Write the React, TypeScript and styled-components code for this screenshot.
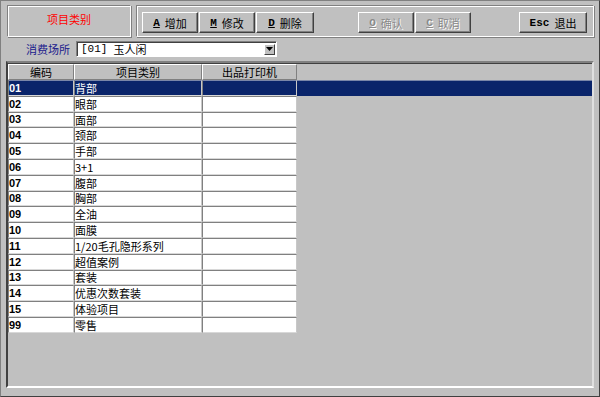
import React from "react";
import styled, { createGlobalStyle, css } from "styled-components";

const GlobalStyle = createGlobalStyle`
  html, body {
    margin: 0;
    padding: 0;
    background: #c0c0c0;
  }
  * {
    box-sizing: border-box;
  }
`;

const CJK = `"Noto Sans CJK SC", "Liberation Sans", sans-serif`;

const rows = [
  { code: "01", name: "背部" },
  { code: "02", name: "眼部" },
  { code: "03", name: "面部" },
  { code: "04", name: "颈部" },
  { code: "05", name: "手部" },
  { code: "06", name: "3+1" },
  { code: "07", name: "腹部" },
  { code: "08", name: "胸部" },
  { code: "09", name: "全油" },
  { code: "10", name: "面膜" },
  { code: "11", name: "1/20毛孔隐形系列" },
  { code: "12", name: "超值案例" },
  { code: "13", name: "套装" },
  { code: "14", name: "优惠次数套装" },
  { code: "15", name: "体验项目" },
  { code: "99", name: "零售" },
];

const Window = styled.div`
  width: 600px;
  height: 397px;
  display: flex;
  flex-direction: column;
  padding: 4px 5px 8px 5px;
  background: #c0c0c0;
  border-top: 1px solid #808080;
  border-left: 1px solid #808080;
  border-right: 1px solid #404040;
  border-bottom: 1px solid #404040;
  font-family: ${CJK};
  font-size: 11px;
  color: #000;
`;

const TopBar = styled.div`
  display: flex;
  gap: 5px;
  height: 32px;
`;

const etched = css`
  border-top: 1px solid #808080;
  border-left: 1px solid #808080;
  border-right: 1px solid #ffffff;
  border-bottom: 1px solid #ffffff;
  box-shadow: inset 1px 1px 0 #ffffff, 1px 1px 0 #808080;
`;

const TitlePanel = styled.div`
  ${etched};
  width: 125px;
  margin-left: 1px;
  display: flex;
  align-items: center;
  justify-content: center;
  padding-bottom: 4px;
  color: #ff0000;
  font-size: 11px;
`;

const Toolbar = styled.div`
  ${etched};
  flex: 1;
  display: flex;
  align-items: flex-start;
  padding: 6px 6px 0 5px;
`;

const ButtonGroup = styled.div`
  display: flex;
  gap: 1px;
`;

const Spacer = styled.div<{ $w: number }>`
  width: ${({ $w }) => $w}px;
  flex: none;
`;

const ToolButton = styled.button<{ $w?: number; $disabled?: boolean }>`
  width: ${({ $w }) => $w ?? 56}px;
  height: 21px;
  padding: 0;
  margin: 0;
  background: #c0c0c0;
  border-top: 1px solid #ffffff;
  border-left: 1px solid #ffffff;
  border-right: 1px solid #404040;
  border-bottom: 1px solid #404040;
  box-shadow: inset -1px -1px 0 #808080;
  display: flex;
  align-items: center;
  justify-content: center;
  gap: 5px;
  font-family: ${CJK};
  font-size: 11px;
  color: ${({ $disabled }) => ($disabled ? "#8a8a8a" : "#000")};
  text-shadow: ${({ $disabled }) => ($disabled ? "1px 1px 0 #ffffff" : "none")};
`;

const HotKey = styled.span<{ $u?: boolean }>`
  font-family: "Liberation Mono", monospace;
  font-size: 11px;
  font-weight: bold;
  text-decoration: ${({ $u }) => ($u ? "underline" : "none")};
`;

const FilterRow = styled.div`
  display: flex;
  align-items: center;
  margin-top: 4px;
  height: 16px;
`;

const FilterLabel = styled.span`
  width: 70px;
  padding-left: 20px;
  color: #1a1a8c;
  font-size: 11px;
`;

const Combo = styled.div`
  width: 201px;
  height: 16px;
  background: #ffffff;
  border-top: 1px solid #808080;
  border-left: 1px solid #808080;
  border-right: 1px solid #ffffff;
  border-bottom: 1px solid #ffffff;
  box-shadow: inset 1px 1px 0 #404040;
  display: flex;
  align-items: center;
  padding: 0 1px 0 4px;
`;

const ComboText = styled.span`
  flex: 1;
  display: flex;
  align-items: center;
  gap: 6px;
  font-size: 11px;
  line-height: 14px;
`;

const ComboCode = styled.span`
  font-family: "Liberation Mono", monospace;
  font-size: 11px;
`;

const ComboArrow = styled.div`
  width: 11px;
  height: 11px;
  background: #c0c0c0;
  border-top: 1px solid #ffffff;
  border-left: 1px solid #ffffff;
  border-right: 1px solid #404040;
  border-bottom: 1px solid #404040;
  display: flex;
  align-items: center;
  justify-content: center;
`;

const GridPanel = styled.div`
  flex: 1;
  margin-top: 4px;
  background: #c0c0c0;
  border-top: 2px solid #808080;
  border-left: 2px solid #404040;
  border-right: 2px solid #dfdfdf;
  border-bottom: 2px solid #ffffff;
  box-shadow: inset 0 1px 0 #404040;
  padding-top: 1px;
`;

const Grid = styled.div`
  display: grid;
  grid-template-columns: 66px 128px 95px 1fr;
  grid-template-rows: 16px;
  grid-auto-rows: 15.8px;
`;

const HeaderCell = styled.div`
  background: #c0c0c0;
  border-top: 1px solid #ffffff;
  border-left: 1px solid #ffffff;
  border-right: 1px solid #808080;
  border-bottom: 1px solid #808080;
  display: flex;
  align-items: center;
  justify-content: center;
  font-size: 11px;
  line-height: 14px;
`;

const Cell = styled.div<{ $sel: boolean; $code?: boolean }>`
  background: ${({ $sel }) => ($sel ? "#0a246a" : "#ffffff")};
  color: ${({ $sel }) => ($sel ? "#ffffff" : "#000000")};
  border-top: 1px solid ${({ $sel }) => ($sel ? "#7a86a8" : "#808080")};
  border-left: 1px solid #808080;
  border-right: 1px solid #c8c8c8;
  border-bottom: 1px solid #d8d8d8;
  display: flex;
  align-items: center;
  padding-left: 0;
  overflow: hidden;
  white-space: nowrap;
  ${({ $code }) =>
    $code
      ? css`
          font-family: "Liberation Sans", Arial, sans-serif;
          font-weight: bold;
          font-size: 11px;
        `
      : css`
          font-family: ${CJK};
          font-size: 11px;
        `}
`;

const Filler = styled.div<{ $sel: boolean }>`
  background: ${({ $sel }) => ($sel ? "#0a246a" : "transparent")};
  border-top: 1px solid ${({ $sel }) => ($sel ? "#7a86a8" : "transparent")};
`;

export default function App() {
  return (
    <>
      <GlobalStyle />
      <Window>
        <TopBar>
          <TitlePanel>项目类别</TitlePanel>
          <Toolbar>
            <ButtonGroup>
              <ToolButton>
                <HotKey $u>A</HotKey>增加
              </ToolButton>
              <ToolButton>
                <HotKey $u>M</HotKey>修改
              </ToolButton>
              <ToolButton $w={58}>
                <HotKey $u>D</HotKey>删除
              </ToolButton>
            </ButtonGroup>
            <Spacer $w={44} />
            <ButtonGroup>
              <ToolButton $disabled>
                <HotKey $u>O</HotKey>确认
              </ToolButton>
              <ToolButton $disabled>
                <HotKey $u>C</HotKey>取消
              </ToolButton>
            </ButtonGroup>
            <Spacer $w={48} />
            <ToolButton $w={68}>
              <HotKey>Esc</HotKey>退出
            </ToolButton>
          </Toolbar>
        </TopBar>

        <FilterRow>
          <FilterLabel>消费场所</FilterLabel>
          <Combo>
            <ComboText>
              <ComboCode>[01]</ComboCode>
              <span>玉人闲</span>
            </ComboText>
            <ComboArrow>
              <svg width="7" height="4" viewBox="0 0 7 4">
                <path d="M0 0h7L3.5 4z" fill="#000" />
              </svg>
            </ComboArrow>
          </Combo>
        </FilterRow>

        <GridPanel>
          <Grid>
            <HeaderCell>编码</HeaderCell>
            <HeaderCell>项目类别</HeaderCell>
            <HeaderCell>出品打印机</HeaderCell>
            <div />
            {rows.map((r, i) => {
              const sel = i === 0;
              return (
                <React.Fragment key={r.code}>
                  <Cell $sel={sel} $code>
                    {r.code}
                  </Cell>
                  <Cell $sel={sel}>{r.name}</Cell>
                  <Cell $sel={sel} />
                  <Filler $sel={sel} />
                </React.Fragment>
              );
            })}
          </Grid>
        </GridPanel>
      </Window>
    </>
  );
}
